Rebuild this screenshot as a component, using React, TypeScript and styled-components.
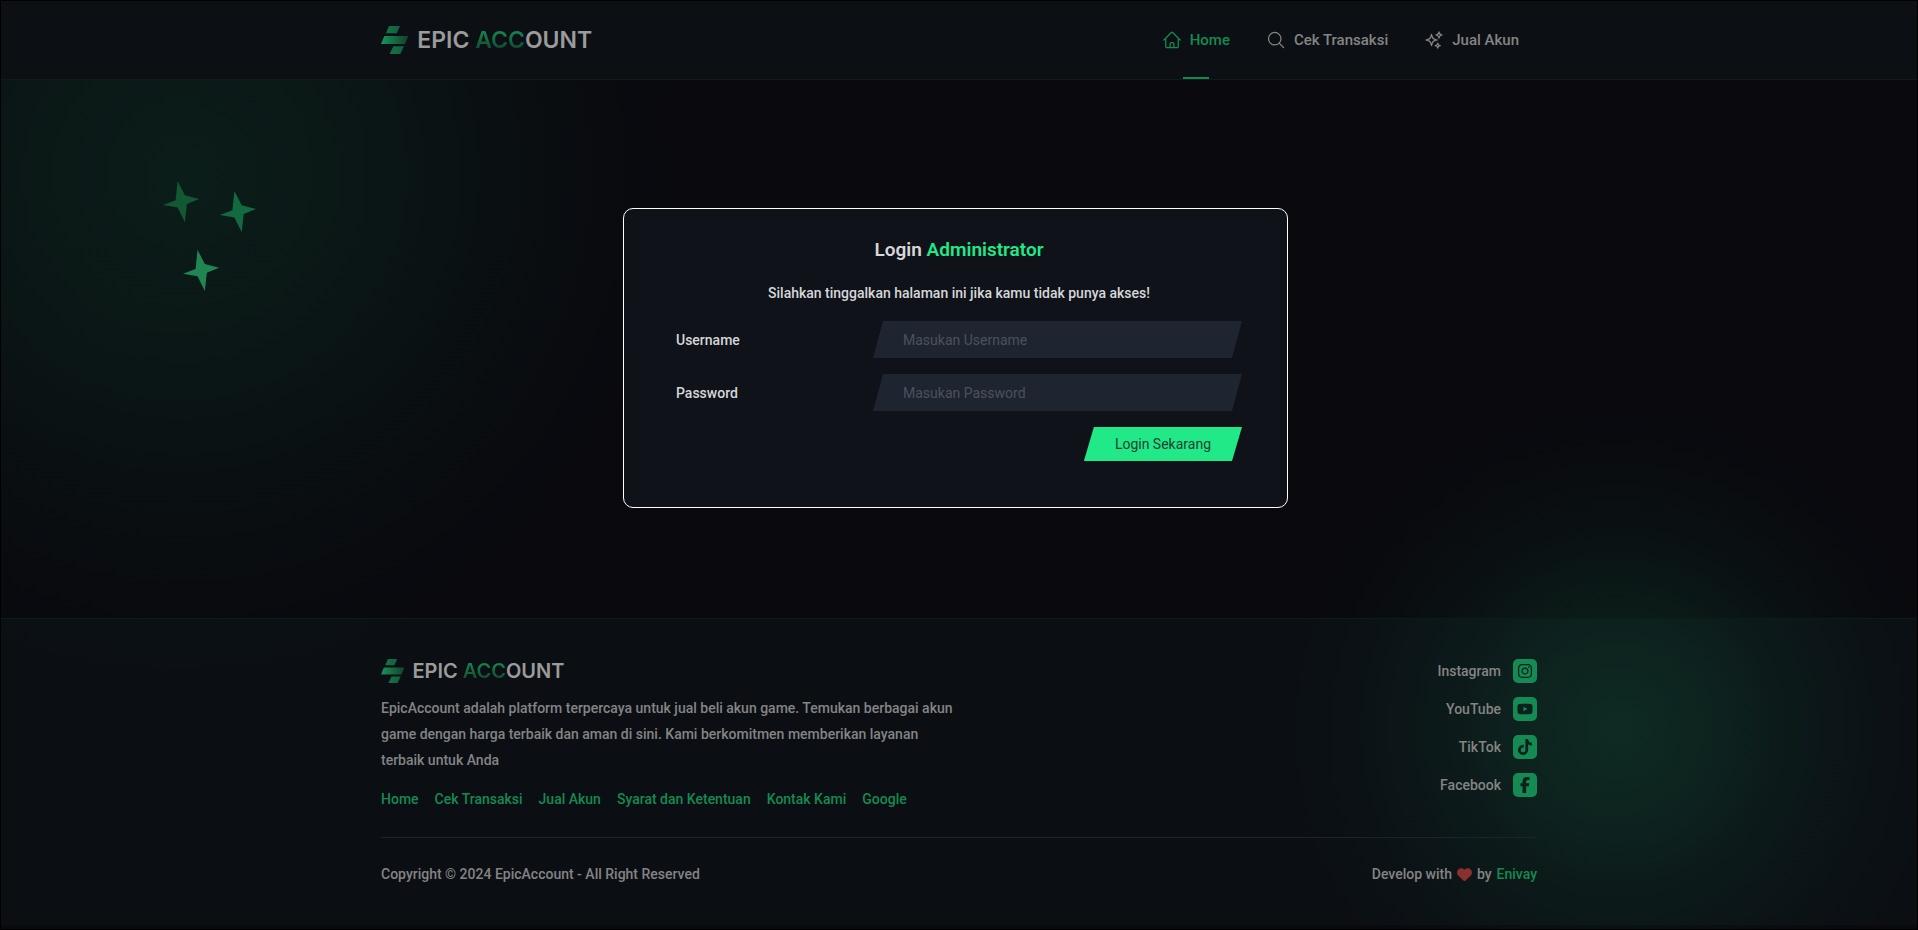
import React from 'react';
import styled, { createGlobalStyle } from 'styled-components';
import { HiOutlineHome, HiOutlineMagnifyingGlass, HiOutlineSparkles } from 'react-icons/hi2';
import { FaFacebookF, FaHeart, FaInstagram, FaTiktok, FaYoutube } from 'react-icons/fa6';

const color = {
  page: '#09090e',
  bar: '#0c1014',
  green: '#158a50',
  bright: '#21e987',
  muted: '#848484',
  text: '#d6d7d9',
};

const GlobalStyle = createGlobalStyle`
  *, *::before, *::after { box-sizing: border-box; }
  body {
    margin: 0;
    background: ${color.page};
    color: ${color.text};
    font-family: Roboto, sans-serif;
    font-size: 14px;
    font-weight: 500;
    line-height: 24px;
  }
  a { text-decoration: none; }
  h1, p, ul { margin: 0; padding: 0; }
  ul { list-style: none; }
`;

const Page = styled.div`
  position: relative;
  isolation: isolate;
  overflow: hidden;
  display: flex;
  flex-direction: column;
  min-height: 100vh;
  padding-bottom: 4px;
  border: 1px solid #000;
`;

const Glow = styled.div<{ $side: 'left' | 'right' }>`
  position: absolute;
  z-index: -1;
  border-radius: 50%;
  pointer-events: none;
  ${({ $side }) =>
    $side === 'left'
      ? `
    top: -346px;
    left: -340px;
    width: 1040px;
    height: 1040px;
    background: radial-gradient(closest-side, rgba(31, 232, 138, 0.09), rgba(31, 232, 138, 0.06) 38%, rgba(31, 232, 138, 0.026) 62%, rgba(31, 232, 138, 0.008) 82%, transparent);
  `
      : `
    right: -40px;
    bottom: -140px;
    width: 680px;
    height: 680px;
    background: radial-gradient(closest-side, rgba(31, 232, 138, 0.13), rgba(31, 232, 138, 0.09) 30%, rgba(31, 232, 138, 0.034) 58%, rgba(31, 232, 138, 0.008) 82%, transparent);
  `}
`;

const StarCluster = styled.svg`
  position: absolute;
  top: 180px;
  left: 162px;
  width: 93px;
  height: 110px;
`;

const Container = styled.div`
  width: 100%;
  max-width: 1180px;
  margin: 0 auto;
  padding: 0 12px;
`;

const Header = styled.header`
  border-bottom: 1px solid #0a1d17;
  background: ${color.bar};
`;

const HeaderRow = styled(Container)`
  display: flex;
  align-items: center;
  justify-content: space-between;
`;

const Brand = styled.a<{ $small?: boolean }>`
  display: flex;
  align-items: center;
  gap: ${({ $small }) => ($small ? 8 : 9)}px;
  height: ${({ $small }) => ($small ? 24 : 28)}px;
  color: #9b9b9b;
  font-family: Inter, sans-serif;
  font-size: ${({ $small }) => ($small ? 20 : 23)}px;
  font-weight: 600;
  line-height: 24px;
  white-space: nowrap;

  svg {
    width: auto;
    height: 100%;
  }
`;

const BrandAccent = styled.span`
  background: linear-gradient(#187f4c 25%, #124b32 80%);
  background-clip: text;
  color: transparent;
`;

const Nav = styled.nav`
  display: flex;
`;

const NavLink = styled.a<{ $active?: boolean }>`
  position: relative;
  display: flex;
  align-items: center;
  gap: 8px;
  height: 78px;
  padding: 0 18px;
  color: ${({ $active }) => ($active ? color.green : color.muted)};
  font-size: 15px;

  svg {
    width: 20px;
    height: 20px;
  }

  &::after {
    content: '';
    display: ${({ $active }) => ($active ? 'block' : 'none')};
    position: absolute;
    bottom: 0;
    left: calc(50% - 13px);
    width: 26px;
    height: 2px;
    background: ${color.green};
  }
`;

const Main = styled.main`
  flex: 1;
  display: flex;
  justify-content: center;
  padding: 128px 19px 108px 12px;
`;

const Card = styled.form`
  display: flex;
  flex-direction: column;
  align-self: flex-start;
  gap: 16px;
  width: 100%;
  max-width: 665px;
  padding: 26px 45px 46px 52px;
  border: 1px solid #fff;
  border-radius: 10px;
  background: #0f1219;
`;

const Title = styled.h1`
  font-size: 19px;
  font-weight: 600;
  line-height: 30px;
  text-align: center;

  span {
    color: ${color.bright};
  }
`;

const Hint = styled.p`
  text-align: center;
`;

const Field = styled.div`
  display: grid;
  grid-template-columns: 197px 1fr;
  align-items: center;
`;

const Input = styled.input`
  width: 100%;
  height: 37px;
  padding: 0 30px;
  border: 0;
  outline: 0;
  background: #1e2530;
  clip-path: polygon(10px 0, 100% 0, calc(100% - 10px) 100%, 0 100%);
  color: ${color.text};
  font: inherit;
  font-weight: 400;

  &::placeholder {
    color: #4b525c;
    opacity: 1;
  }
`;

const Submit = styled.button`
  align-self: flex-end;
  height: 34px;
  padding: 0 31px;
  border: 0;
  background: ${color.bright};
  clip-path: polygon(10px 0, 100% 0, calc(100% - 10px) 100%, 0 100%);
  color: #1f4034;
  font: inherit;
  font-weight: 400;
  cursor: pointer;
`;

const Footer = styled.footer`
  padding: 40px 0 39px;
  border-top: 1px solid #0a1d17;
  background: rgba(60, 140, 130, 0.05);
  color: ${color.muted};
`;

const FooterTop = styled.div`
  display: flex;
  justify-content: space-between;
  padding-bottom: 26px;
`;

const About = styled.div`
  max-width: 580px;
`;

const Description = styled.p`
  margin: 12px 0 14px;
  line-height: 26px;
`;

const FooterLinks = styled.nav`
  display: flex;
  flex-wrap: wrap;
  gap: 0 16px;
`;

const GreenLink = styled.a`
  color: ${color.green};
`;

const SocialList = styled.ul`
  display: flex;
  flex-direction: column;
  align-items: flex-end;
  gap: 14px;
`;

const SocialLink = styled.a`
  display: flex;
  align-items: center;
  gap: 12px;
  color: ${color.muted};
`;

const SocialIcon = styled.span`
  display: grid;
  place-items: center;
  width: 24px;
  height: 24px;
  border-radius: 5px;
  background: #158a52;
  color: #0d211c;
  font-size: 16px;
`;

const FooterBottom = styled.div`
  display: flex;
  justify-content: space-between;
  padding-top: 24px;
  border-top: 1px solid #1b232b;
`;

const Credit = styled.p`
  display: flex;
  align-items: center;
  gap: 5px;
`;

const Heart = styled(FaHeart)`
  color: #8a302f;
  font-size: 15px;
`;

const socials = [
  { name: 'Instagram', Icon: FaInstagram },
  { name: 'YouTube', Icon: FaYoutube },
  { name: 'TikTok', Icon: FaTiktok },
  { name: 'Facebook', Icon: FaFacebookF },
];

const footerLinks = ['Home', 'Cek Transaksi', 'Jual Akun', 'Syarat dan Ketentuan', 'Kontak Kami', 'Google'];

function Logo({ small }: { small?: boolean }) {
  const id = small ? 'mark-footer' : 'mark-header';
  return (
    <Brand href="#" $small={small}>
      <svg viewBox="0 0 82 84" aria-hidden="true">
        <defs>
          <linearGradient id={id}>
            <stop offset="0" stopColor="#17955a" />
            <stop offset="1" stopColor="#13402b" />
          </linearGradient>
          <linearGradient id={`${id}-small`}>
            <stop offset="0" stopColor="#157344" />
            <stop offset="1" stopColor="#15603d" />
          </linearGradient>
        </defs>
        <path d="M24 0H57L47 22H15Z" fill={`url(#${id}-small)`} />
        <path d="M10 30H82L72 54H0Z" fill={`url(#${id})`} />
        <path d="M37 61H69L58 84H26Z" fill={`url(#${id}-small)`} />
      </svg>
      <span>
        EPIC <BrandAccent>ACC</BrandAccent>OUNT
      </span>
    </Brand>
  );
}

function Stars() {
  const star = 'M44 0L66 43L109 54L72 69L66 124L44 80L0 72L38 58Z';
  return (
    <StarCluster viewBox="0 0 280 331" aria-hidden="true">
      <path d={star} fill="#115833" />
      <path d={star} fill="#126b40" transform="translate(171 30)" />
      <path d={star} fill="#208553" transform="translate(60 207)" />
    </StarCluster>
  );
}

export default function App() {
  return (
    <>
      <GlobalStyle />
      <Page>
        <Glow $side="left" />
        <Glow $side="right" />
        <Stars />

        <Header>
          <HeaderRow>
            <Logo />
            <Nav>
              <NavLink href="#" $active>
                <HiOutlineHome />
                Home
              </NavLink>
              <NavLink href="#">
                <HiOutlineMagnifyingGlass />
                Cek Transaksi
              </NavLink>
              <NavLink href="#">
                <HiOutlineSparkles />
                Jual Akun
              </NavLink>
            </Nav>
          </HeaderRow>
        </Header>

        <Main>
          <Card onSubmit={(event) => event.preventDefault()}>
            <Title>
              Login <span>Administrator</span>
            </Title>
            <Hint>Silahkan tinggalkan halaman ini jika kamu tidak punya akses!</Hint>
            <Field>
              <label htmlFor="username">Username</label>
              <Input id="username" type="text" placeholder="Masukan Username" />
            </Field>
            <Field>
              <label htmlFor="password">Password</label>
              <Input id="password" type="password" placeholder="Masukan Password" />
            </Field>
            <Submit type="submit">Login Sekarang</Submit>
          </Card>
        </Main>

        <Footer>
          <Container>
            <FooterTop>
              <About>
                <Logo small />
                <Description>
                  EpicAccount adalah platform terpercaya untuk jual beli akun game. Temukan berbagai akun game dengan
                  harga terbaik dan aman di sini. Kami berkomitmen memberikan layanan terbaik untuk Anda
                </Description>
                <FooterLinks>
                  {footerLinks.map((label) => (
                    <GreenLink key={label} href="#">
                      {label}
                    </GreenLink>
                  ))}
                </FooterLinks>
              </About>
              <SocialList>
                {socials.map(({ name, Icon }) => (
                  <li key={name}>
                    <SocialLink href="#">
                      {name}
                      <SocialIcon>
                        <Icon />
                      </SocialIcon>
                    </SocialLink>
                  </li>
                ))}
              </SocialList>
            </FooterTop>
            <FooterBottom>
              <p>Copyright © 2024 EpicAccount - All Right Reserved</p>
              <Credit>
                Develop with <Heart /> by <GreenLink href="#">Enivay</GreenLink>
              </Credit>
            </FooterBottom>
          </Container>
        </Footer>
      </Page>
    </>
  );
}
